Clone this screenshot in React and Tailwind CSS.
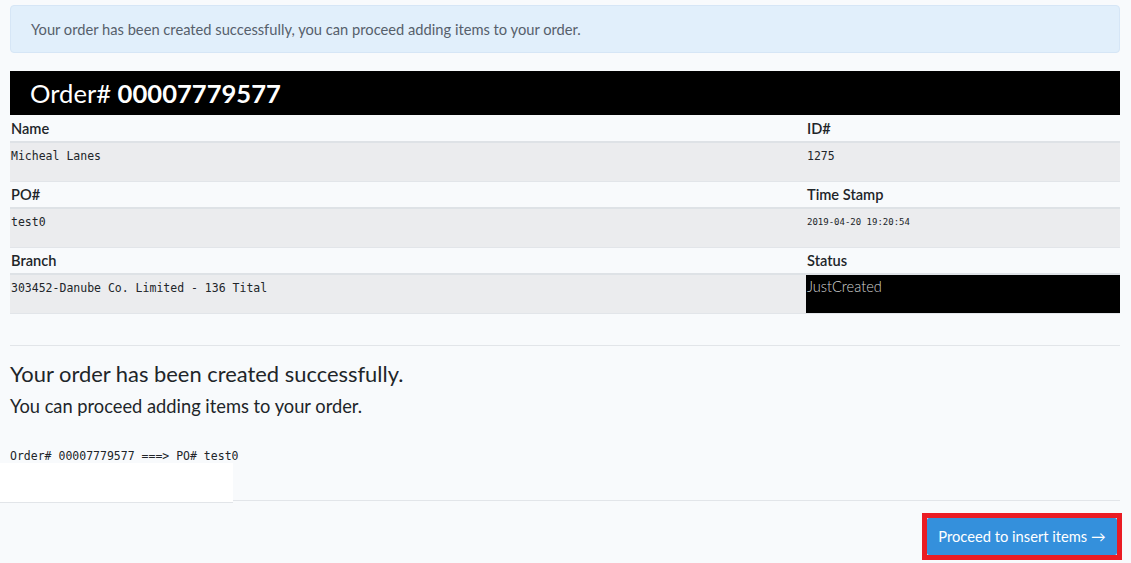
export default function App() {
  const mono = "font-['DejaVu_Sans_Mono',monospace]";
  const rows = [
    { l1: "Name", v1: "Micheal Lanes", l2: "ID#", v2: "1275" },
    { l1: "PO#", v1: "test0", l2: "Time Stamp", v2: "2019-04-20 19:20:54", small: true },
    { l1: "Branch", v1: "303452-Danube Co. Limited - 136 Tital", l2: "Status", v2: "JustCreated", status: true },
  ];
  return (
    <div className="min-h-[563px] w-full bg-[#f8fafc] font-['Lato',sans-serif] text-[#212529]">
      <div className="px-[10px] pt-[5px]">
        <div className="h-[48px] w-[1110px] rounded-[4px] border border-[#d6e6f6] bg-[#e1effb] pl-[20px] flex items-center text-[14.7px] text-[#56606b]">
          Your order has been created successfully, you can proceed adding items to your order.
        </div>
        <div className="mt-[18px] h-[44px] w-[1110px] bg-black pl-[20px] flex items-center text-[25.6px] text-white">
          <span>Order#&nbsp;</span>
          <span className="font-bold">00007779577</span>
        </div>
        <div className="mt-[1px] w-[1110px]">
          {rows.map((r, i) => (
            <div key={i}>
              <div className="grid grid-cols-[796px_314px] h-[27px] items-center text-[14.6px] font-semibold border-b-2 border-[#dee2e6]">
                <div className="pl-[1px]">{r.l1}</div>
                <div className="pl-[1px]">{r.l2}</div>
              </div>
              <div className="grid grid-cols-[796px_314px] h-[39px] bg-[#ebecee] border-b border-[#e2e5e9]">
                <div className={`pl-[1px] pt-[5px] text-[11.5px] text-[#212529] ${mono}`}>{r.v1}</div>
                {r.status ? (
                  <div className="bg-black pl-[1px] text-[14.6px] text-[#d4d4d4] font-light leading-[24px]">{r.v2}</div>
                ) : (
                  <div className={`pl-[1px] ${r.small ? "pt-[7px] text-[9px]" : "pt-[5px] text-[11.5px]"} ${mono}`}>{r.v2}</div>
                )}
              </div>
            </div>
          ))}
        </div>
        <div className="mt-[31px] h-px w-[1110px] bg-[#e2e5e9]" />
        <div className="mt-[15px] text-[21.9px] leading-[26px]">Your order has been created successfully.</div>
        <div className="mt-[7px] text-[18.3px] leading-[24px]">You can proceed adding items to your order.</div>
        <div className={`mt-[31px] text-[11.5px] leading-[14px] ${mono}`}>Order# 00007779577 ===&gt; PO# test0</div>
      </div>
      <div className="flex items-end">
        <div className="h-[40px] w-[233px] bg-white border-b border-[#e2e5e9]" />
        <div className="mb-[2px] h-px w-[887px] bg-[#e2e5e9]" />
      </div>
      <div className="flex justify-end pr-[9px] pt-[10px]">
        <div className="border-[5px] border-[#ea1c24]">
          <button className="h-[37px] w-[190px] rounded-[2px] bg-[#3490dc] text-[14.7px] text-white">
            Proceed to insert items →
          </button>
        </div>
      </div>
    </div>
  );
}
